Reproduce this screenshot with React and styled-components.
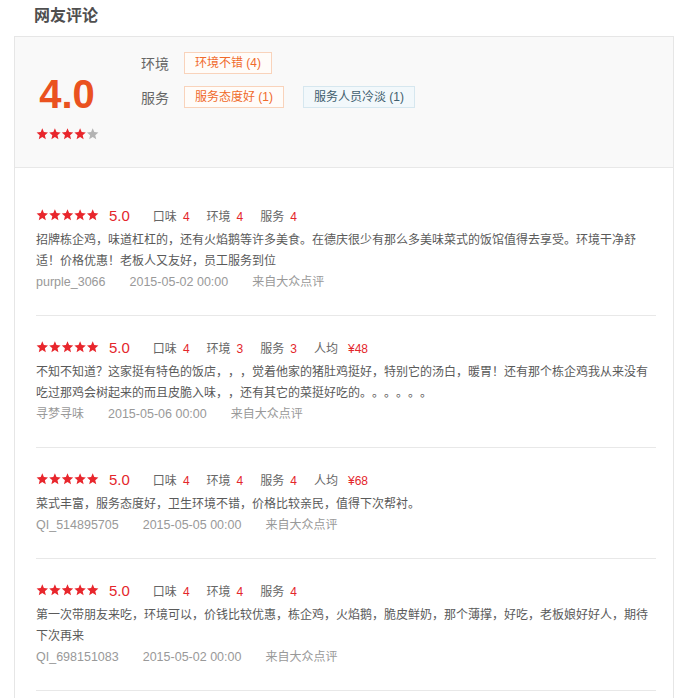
import React from "react";
import styled, { createGlobalStyle } from "styled-components";

const GlobalStyle = createGlobalStyle`
  html, body { margin: 0; padding: 0; background: #fff; }
  body {
    font-family: "Liberation Sans", "Noto Sans CJK SC", sans-serif;
    color: #666;
    text-spacing-trim: space-all;
  }
`;

const Page = styled.div`
  padding: 0 14px;
`;

const Title = styled.h2`
  margin: 0 0 4px;
  padding-left: 20px;
  font-size: 16px;
  line-height: 32px;
  font-weight: bold;
  color: #4f4f4f;
`;

const Box = styled.section`
  border: 1px solid #e6e6e6;
`;

const Summary = styled.div`
  display: flex;
  height: 130px;
  background: #f9f9f9;
  border-bottom: 1px solid #e8e8e8;
`;

const ScoreCol = styled.div`
  width: 104px;
  display: flex;
  flex-direction: column;
  align-items: center;
  padding-top: 37px;
`;

const BigScore = styled.div`
  font-family: "Liberation Sans", sans-serif;
  font-size: 40px;
  line-height: 40px;
  font-weight: bold;
  color: #ea5220;
  margin-bottom: 14px;
`;

const TagsCol = styled.div`
  margin-left: 22px;
  padding-top: 15px;
  display: flex;
  flex-direction: column;
  gap: 12px;
`;

const TagRow = styled.div`
  display: flex;
  align-items: center;
  height: 22px;
`;

const TagLabel = styled.span`
  width: 28px;
  margin-right: 15px;
  font-size: 14px;
  color: #666;
  white-space: nowrap;
`;

const Tag = styled.span`
  box-sizing: border-box;
  height: 22px;
  line-height: 20px;
  padding: 0 10px;
  margin-right: 19px;
  font-size: 12px;
  white-space: nowrap;
  border: 1px solid ${(p) => (p.$cool ? "#d6e7ef" : "#f9d3bb")};
  background: ${(p) => (p.$cool ? "#f2f8fb" : "#fffcf9")};
  color: ${(p) => (p.$cool ? "#3f5e6e" : "#f06a2a")};
`;

const List = styled.div`
  padding: 16px 17px 20px 21px;
`;

const Review = styled.article`
  padding: 19px 0 22px;
  border-bottom: 1px solid #e8e8e8;
`;

const Header = styled.div`
  display: flex;
  align-items: center;
  height: 24px;
`;

const Score = styled.span`
  margin-left: 10px;
  margin-right: 23px;
  font-size: 15px;
  color: #e4262b;
`;

const Item = styled.span`
  margin-right: 17px;
  font-size: 12px;
  color: #666;
  white-space: nowrap;
`;

const Num = styled.span`
  margin-left: ${(p) => (p.$wide ? "10px" : "6px")};
  color: #e4262b;
`;

const Content = styled.p`
  margin: 3px 0 0;
  font-size: 12px;
  line-height: 21px;
  color: #5a5a5a;
`;

const Meta = styled.div`
  display: flex;
  line-height: 21px;
  color: #999;
`;

const MetaItem = styled.span`
  margin-right: ${(p) => (p.$last ? "0" : "24px")};
  font-size: ${(p) => (p.$latin ? "12.5px" : "12px")};
  white-space: nowrap;
`;

const StarSvg = styled.svg`
  display: block;
  flex: none;
`;

function starPoints() {
  const pts = [];
  for (let k = 0; k < 10; k++) {
    const r = k % 2 === 0 ? 12 : 5.4;
    const a = ((-90 + k * 36) * Math.PI) / 180;
    pts.push(`${(12 + r * Math.cos(a)).toFixed(2)},${(12.6 + r * Math.sin(a)).toFixed(2)}`);
  }
  return pts.join(" ");
}
const STAR = starPoints();

function Stars({ value }) {
  return (
    <StarSvg width="63" height="12" viewBox="0 0 126 24">
      {[0, 1, 2, 3, 4].map((i) => (
        <polygon
          key={i}
          points={STAR}
          transform={`translate(${i * 25.2 + 0.6} 0)`}
          fill={i < value ? "#e8262c" : "#b3b3b3"}
        />
      ))}
    </StarSvg>
  );
}

const reviews = [
  {
    scores: [["口味", 4], ["环境", 4], ["服务", 4]],
    text: "招牌栋企鸡，味道杠杠的，还有火焰鹅等许多美食。在德庆很少有那么多美味菜式的饭馆值得去享受。环境干净舒适！价格优惠！老板人又友好，员工服务到位",
    user: "purple_3066",
    latinUser: true,
    date: "2015-05-02 00:00",
  },
  {
    scores: [["口味", 4], ["环境", 3], ["服务", 3]],
    price: "¥48",
    text: "不知不知道？这家挺有特色的饭店，，，觉着他家的猪肚鸡挺好，特别它的汤白，暖胃！还有那个栋企鸡我从来没有吃过那鸡会树起来的而且皮脆入味，，还有其它的菜挺好吃的。。。。。。",
    user: "寻梦寻味",
    latinUser: false,
    date: "2015-05-06 00:00",
  },
  {
    scores: [["口味", 4], ["环境", 4], ["服务", 4]],
    price: "¥68",
    text: "菜式丰富，服务态度好，卫生环境不错，价格比较亲民，值得下次帮衬。",
    user: "QI_514895705",
    latinUser: true,
    date: "2015-05-05 00:00",
  },
  {
    scores: [["口味", 4], ["环境", 4], ["服务", 4]],
    text: "第一次带朋友来吃，环境可以，价钱比较优惠，栋企鸡，火焰鹅，脆皮鲜奶，那个薄撑，好吃，老板娘好好人，期待下次再来",
    user: "QI_698151083",
    latinUser: true,
    date: "2015-05-02 00:00",
  },
];

export default function App() {
  return (
    <Page>
      <GlobalStyle />
      <Title>网友评论</Title>
      <Box>
        <Summary>
          <ScoreCol>
            <BigScore>4.0</BigScore>
            <Stars value={4} />
          </ScoreCol>
          <TagsCol>
            <TagRow>
              <TagLabel>环境</TagLabel>
              <Tag>环境不错 (4)</Tag>
            </TagRow>
            <TagRow>
              <TagLabel>服务</TagLabel>
              <Tag>服务态度好 (1)</Tag>
              <Tag $cool>服务人员冷淡 (1)</Tag>
            </TagRow>
          </TagsCol>
        </Summary>
        <List>
          {reviews.map((r, idx) => (
            <Review key={idx}>
              <Header>
                <Stars value={5} />
                <Score>5.0</Score>
                {r.scores.map(([label, n]) => (
                  <Item key={label}>
                    {label}
                    <Num>{n}</Num>
                  </Item>
                ))}
                {r.price && (
                  <Item>
                    人均
                    <Num $wide>{r.price}</Num>
                  </Item>
                )}
              </Header>
              <Content>{r.text}</Content>
              <Meta>
                <MetaItem $latin={r.latinUser}>{r.user}</MetaItem>
                <MetaItem $latin>{r.date}</MetaItem>
                <MetaItem $last>来自大众点评</MetaItem>
              </Meta>
            </Review>
          ))}
        </List>
      </Box>
    </Page>
  );
}
